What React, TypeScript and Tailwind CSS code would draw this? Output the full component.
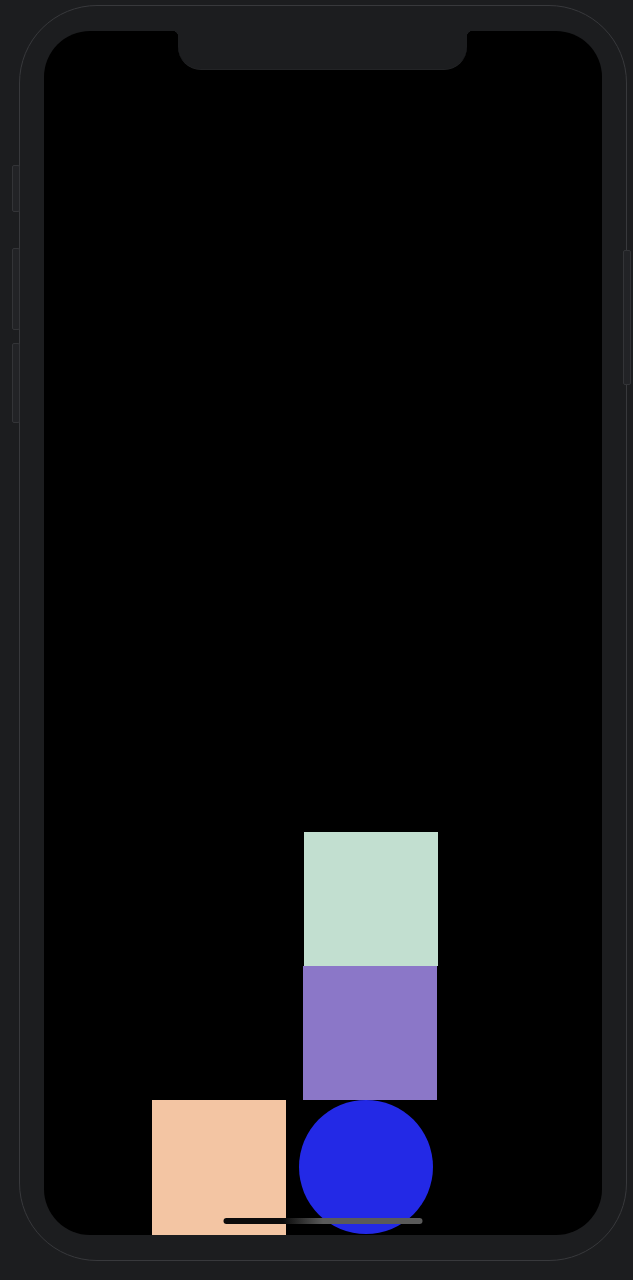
const buttonClass = "w-[8px] rounded-[2px] border border-[#333437] bg-[#222326]";

const App = () =>
  <div className="relative w-[633px] h-[1280px] overflow-hidden bg-[#1c1d1f] pt-[5px] pl-[19px]">
    {/* hardware buttons, sitting over the body edge */}
    <div className="absolute left-[12px] top-[165px] flex flex-col">
      <div className={buttonClass + " h-[47px]"}></div>
      <div className={buttonClass + " h-[82px] mt-[36px]"}></div>
      <div className={buttonClass + " h-[80px] mt-[13px]"}></div>
    </div>
    <div className={"absolute left-[623px] top-[250px] h-[135px] " + buttonClass}></div>

    {/* phone body */}
    <div className="w-[608px] h-[1256px] rounded-[78px] border border-[#38393c] bg-[#1c1d1f] pl-[24px] pr-[23px] pt-[25px] pb-[25px]">
      {/* screen */}
      <div className="relative w-[558px] h-[1204px] rounded-[46px] bg-black overflow-hidden flex flex-col justify-end">
        <div className="ml-[260px] w-[134px] h-[134px] bg-[#c2dfd0]"></div>
        <div className="ml-[259px] w-[134px] h-[134px] bg-[#8b77c8]"></div>
        <div className="flex h-[135px] gap-[13px] pl-[108px]">
          <div className="w-[134px] h-[135px] bg-[#f3c5a3]"></div>
          <div className="w-[134px] h-[134px] rounded-full bg-[#2329e6]"></div>
        </div>

        {/* notch */}
        <div className="absolute top-0 left-[128px] flex">
          <div className="w-[6px] h-[6px] bg-[radial-gradient(circle_at_0_100%,transparent_6px,#1c1d1f_6.5px)]"></div>
          <div className="w-[289px] h-[39px] rounded-b-[23px] bg-[#1c1d1f] border-b border-[#232426]"></div>
          <div className="w-[6px] h-[6px] bg-[radial-gradient(circle_at_100%_100%,transparent_6px,#1c1d1f_6.5px)]"></div>
        </div>

        {/* home indicator */}
        <div className="absolute bottom-[11px] left-1/2 -translate-x-1/2 w-[199px] h-[6px] rounded-full bg-[linear-gradient(90deg,#0b0b0b_0%,#0b0b0b_30%,#5a5a5a_50%,#5a5a5a_100%)]"></div>
      </div>
    </div>
  </div>

export default App;
